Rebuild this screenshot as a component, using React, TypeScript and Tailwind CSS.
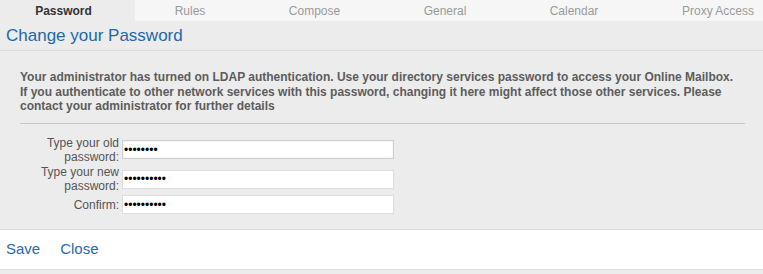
import React from "react";

const tabs = [
  { label: "Password", cls: "w-[135px] pr-[8px] bg-[#ececec] text-[#333] font-bold justify-center" },
  { label: "Rules", cls: "w-[110px] bg-[#f6f6f6] text-[#9a9a9a] justify-center" },
  { label: "Compose", cls: "w-[139px] bg-[#f6f6f6] text-[#9a9a9a] justify-center" },
  { label: "General", cls: "w-[122px] bg-[#f6f6f6] text-[#9a9a9a] justify-center" },
  { label: "Calendar", cls: "w-[136px] bg-[#f6f6f6] text-[#9a9a9a] justify-center" },
  { label: "Proxy Access", cls: "w-[121px] pl-[31px] bg-[#f6f6f6] text-[#9a9a9a] justify-center" },
];

function Row({ label, dots, h, first }: { label: string; dots: number; h: string; first?: boolean }) {
  return (
    <div className={`flex items-center ${h}`}>
      <div className="w-[122px] shrink-0 pl-[20px] pr-[3px] text-right text-[12px] leading-[14px] text-[#555]">{label}</div>
      <input
        type="password"
        readOnly
        value={"x".repeat(dots)}
        className={`w-[272px] h-[19px] bg-white px-[1px] text-[12px] text-black outline-none border ${
          first ? "border-[#cfcfcf] shadow-[inset_0_0_2px_rgba(0,0,0,0.12)]" : "border-[#dedede]"
        }`}
        style={{ fontFamily: "'Liberation Sans', Arial, sans-serif" }}
      />
    </div>
  );
}

export default function App() {
  return (
    <div
      className="w-[763px] h-[274px] bg-[#ececec] overflow-hidden"
      style={{ fontFamily: "'Liberation Sans', Arial, sans-serif" }}
    >
      <div className="flex h-[21px] text-[12px]">
        {tabs.map((t) => (
          <div key={t.label} className={`flex items-center shrink-0 ${t.cls}`}>
            {t.label}
          </div>
        ))}
      </div>
      <div className="h-[30px] flex items-center border-b border-[#dcdcdc] pl-[6px] text-[17px] text-[#2268a8]">
        Change your Password
      </div>
      <div className="pl-[20px] pr-[18px] pt-[19px]">
        <p className="text-[12px] leading-[14.5px] font-bold text-[#5c5c5c]">
          Your administrator has turned on LDAP authentication. Use your directory services password to access your
          Online Mailbox.
          <br />
          If you authenticate to other network services with this password, changing it here might affect those other
          services. Please contact your administrator for further details
        </p>
        <div className="mt-[9px] h-px bg-[#c6c6c6]" />
      </div>
      <div className="pt-[12px] flex flex-col gap-[1px]">
        <Row label="Type your old password:" dots={8} h="h-[28px]" first />
        <Row label="Type your new password:" dots={10} h="h-[29px]" />
        <Row label="Confirm:" dots={10} h="h-[20px]" />
      </div>
      <div className="mt-[14px] h-[41px] bg-white border-y border-[#dcdcdc] flex items-center pl-[6px] gap-[20px] text-[15px] text-[#2a6aab]">
        <span>Save</span>
        <span>Close</span>
      </div>
    </div>
  );
}
